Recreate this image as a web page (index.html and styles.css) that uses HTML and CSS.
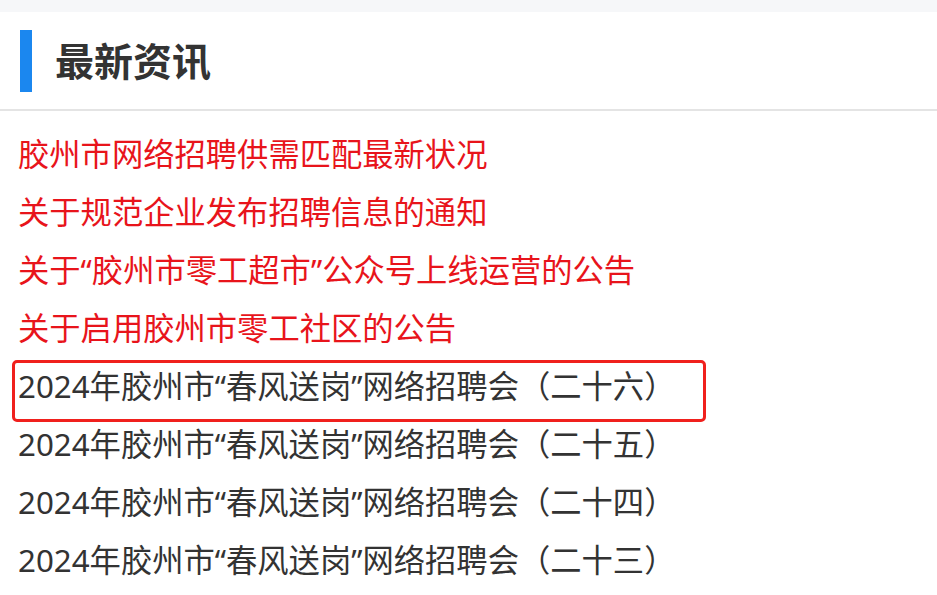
FILE: index.html
```html
<!DOCTYPE html>
<html lang="zh">
<head>
<meta charset="utf-8">
<link rel="stylesheet" href="styles.css">
</head>
<body>
<div class="topstrip"></div>
<section class="panel">
  <header class="head">
    <span class="bar"></span>
    <h2 class="title">最新资讯</h2>
  </header>
  <ul class="list">
    <li class="item red">胶州市网络招聘供需匹配最新状况</li>
    <li class="item red">关于规范企业发布招聘信息的通知</li>
    <li class="item red">关于“胶州市零工超市”公众号上线运营的公告</li>
    <li class="item red">关于启用胶州市零工社区的公告</li>
    <li class="item gray boxed">2024年胶州市“春风送岗”网络招聘会（二十六）</li>
    <li class="item gray">2024年胶州市“春风送岗”网络招聘会（二十五）</li>
    <li class="item gray">2024年胶州市“春风送岗”网络招聘会（二十四）</li>
    <li class="item gray">2024年胶州市“春风送岗”网络招聘会（二十三）</li>
  </ul>
</section>
</body>
</html>
```
FILE: styles.css
```css
html, body {
  margin: 0;
  padding: 0;
  background: #ffffff;
  font-family: "Noto Sans", "Noto Sans CJK SC", sans-serif;
  overflow: hidden;
}
.topstrip {
  height: 12px;
  background: #f6f7f9;
}
.panel {
  background: #ffffff;
}
.head {
  display: flex;
  align-items: center;
  height: 99px;
  padding-left: 20px;
  border-bottom: 2px solid #e4e4e4;
  box-sizing: border-box;
}
.bar {
  width: 12px;
  height: 62px;
  background: #1b87ef;
  margin-top: 1px;
}
.title {
  margin: 0 0 0 23px;
  font-size: 39px;
  font-weight: 700;
  color: #333333;
  line-height: 1;
}
.list {
  list-style: none;
  margin: 0;
  padding: 14px 0 0 0;
}
.item {
  position: relative;
  height: 58px;
  line-height: 58px;
  padding-left: 18px;
  font-size: 31.3px;
  white-space: nowrap;
}
.red { color: #e8141b; }
.gray { color: #333333; }
.boxed::after {
  content: "";
  position: absolute;
  left: 12px;
  top: 3px;
  width: 694px;
  height: 62px;
  border: 3px solid #f0201d;
  border-radius: 5px;
  box-sizing: border-box;
}
```
